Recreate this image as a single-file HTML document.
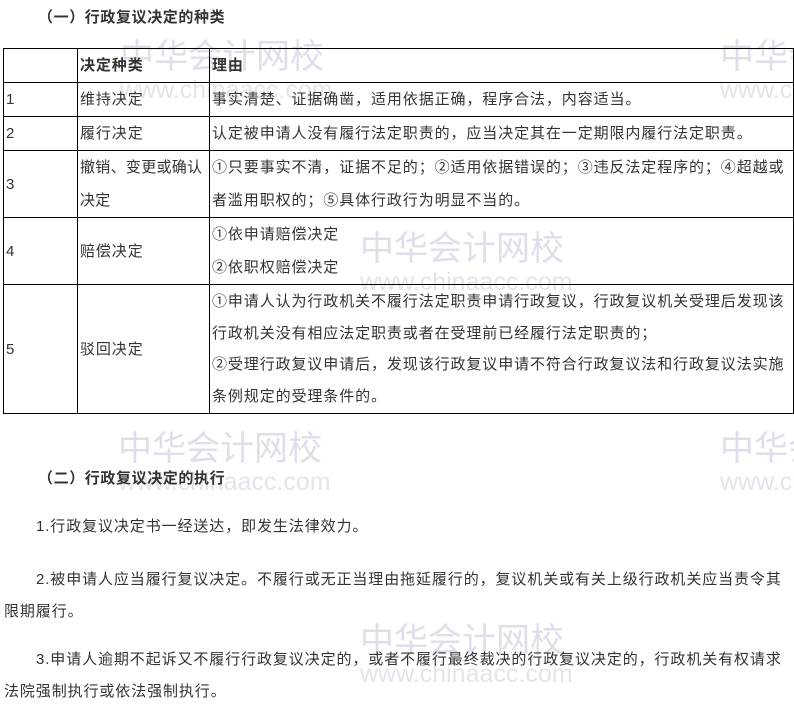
<!DOCTYPE html>
<html><head><meta charset="utf-8"><style>
body{margin:0;width:794px;height:699px;background:#fff;position:relative;overflow:hidden;font-family:"Liberation Sans","Noto Sans CJK SC",sans-serif;color:#333;font-size:15px;letter-spacing:0.9px}
.a{position:absolute;white-space:nowrap}
.wm{position:absolute;color:#dde0ea;font-size:34px;white-space:nowrap;line-height:1;letter-spacing:0}
.wm2{position:absolute;color:#e3e5ec;font-size:25px;white-space:nowrap;line-height:1;letter-spacing:0}
table{position:absolute;left:3px;top:48px;border-collapse:collapse;width:791px}
td{border:1px solid #000;padding:0 2px;vertical-align:middle;line-height:33px;color:#333}
b{font-weight:bold;color:#333}
</style></head><body>
<div class="wm" style="left:120px;top:40px">中华会计网校</div><div class="wm2" style="left:120px;top:78px">www.chinaacc.com</div>
<div class="wm" style="left:720px;top:40px">中华会计网校</div><div class="wm2" style="left:720px;top:78px">www.chi</div>
<div class="wm" style="left:360px;top:232px">中华会计网校</div><div class="wm2" style="left:360px;top:270px">www.chinaacc.com</div>
<div class="wm" style="left:118px;top:432px">中华会计网校</div><div class="wm2" style="left:118px;top:470px">www.chinaacc.com</div>
<div class="wm" style="left:720px;top:432px">中华会计网校</div><div class="wm2" style="left:720px;top:470px">www.chi</div>
<div class="wm" style="left:360px;top:624px">中华会计网校</div><div class="wm2" style="left:360px;top:662px">www.chinaacc.com</div>
<div class="a" style="left:38px;top:6px;font-weight:bold;letter-spacing:0.6px">（一）行政复议决定的种类</div>
<table>
<colgroup><col style="width:74px"><col style="width:132px"><col></colgroup>
<tr style="height:34px"><td></td><td><b>决定种类</b></td><td><b>理由</b></td></tr>
<tr style="height:34px"><td>1</td><td>维持决定</td><td>事实清楚、证据确凿，适用依据正确，程序合法，内容适当。</td></tr>
<tr style="height:34px"><td>2</td><td>履行决定</td><td>认定被申请人没有履行法定职责的，应当决定其在一定期限内履行法定职责。</td></tr>
<tr style="height:67px"><td>3</td><td style="letter-spacing:0.3px">撤销、变更或确认决定</td><td>①只要事实不清，证据不足的；②适用依据错误的；③违反法定程序的；④超越或者滥用职权的；⑤具体行政行为明显不当的。</td></tr>
<tr style="height:66px"><td>4</td><td>赔偿决定</td><td>①依申请赔偿决定<br>②依职权赔偿决定</td></tr>
<tr style="height:129px"><td>5</td><td>驳回决定</td><td style="line-height:31.5px">①申请人认为行政机关不履行法定职责申请行政复议，行政复议机关受理后发现该行政机关没有相应法定职责或者在受理前已经履行法定职责的；<br>②受理行政复议申请后，发现该行政复议申请不符合行政复议法和行政复议法实施条例规定的受理条件的。</td></tr>
</table>
<div class="a" style="left:38px;top:467px;font-weight:bold;letter-spacing:0.6px">（二）行政复议决定的执行</div>
<div class="a" style="left:36px;top:515px">1.行政复议决定书一经送达，即发生法律效力。</div>
<div class="a" style="left:4px;top:564px;white-space:normal;width:786px;line-height:32px;text-indent:32px">2.被申请人应当履行复议决定。不履行或无正当理由拖延履行的，复议机关或有关上级行政机关应当责令其限期履行。</div>
<div class="a" style="left:4px;top:644px;white-space:normal;width:786px;line-height:32px;text-indent:32px">3.申请人逾期不起诉又不履行行政复议决定的，或者不履行最终裁决的行政复议决定的，行政机关有权请求法院强制执行或依法强制执行。</div>
</body></html>
